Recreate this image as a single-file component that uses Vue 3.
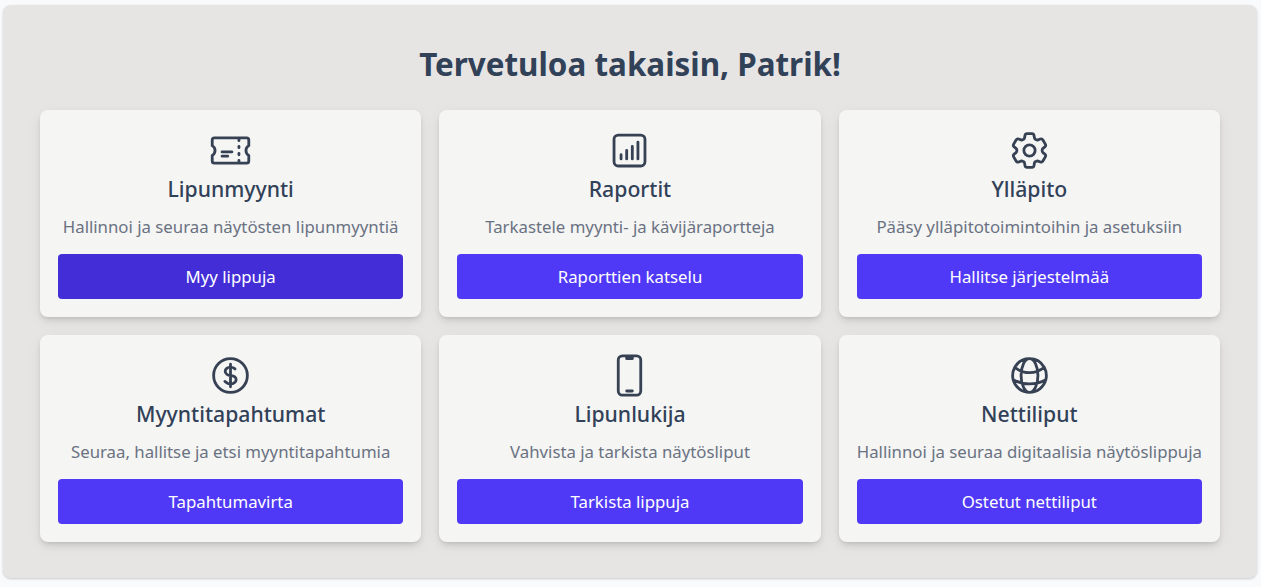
<template>
  <div class="page">
    <main class="panel">
      <h1 class="welcome">Tervetuloa takaisin, Patrik!</h1>
      <div class="grid">
        <section v-for="(card, i) in cards" :key="card.title" class="card">
          <svg class="icon" viewBox="0 0 24 24" fill="none" stroke="currentColor" stroke-width="1.5" stroke-linecap="round" stroke-linejoin="round">
            <path v-for="d in card.paths" :key="d" :d="d" />
          </svg>
          <h2 class="title">{{ card.title }}</h2>
          <p class="desc">{{ card.desc }}</p>
          <button class="action" :class="{ hovered: i === 0 }">{{ card.action }}</button>
        </section>
      </div>
    </main>
  </div>
</template>

<script setup>
const cards = [
  {
    title: 'Lipunmyynti',
    desc: 'Hallinnoi ja seuraa näytösten lipunmyyntiä',
    action: 'Myy lippuja',
    paths: ['M16.5 6v.75m0 3v.75m0 3v.75m0 3V18m-9-5.25h5.25M7.5 15h3M3.375 5.25c-.621 0-1.125.504-1.125 1.125v3.026a2.999 2.999 0 0 1 0 5.198v3.026c0 .621.504 1.125 1.125 1.125h17.25c.621 0 1.125-.504 1.125-1.125v-3.026a2.999 2.999 0 0 1 0-5.198V6.375c0-.621-.504-1.125-1.125-1.125H3.375Z'],
  },
  {
    title: 'Raportit',
    desc: 'Tarkastele myynti- ja kävijäraportteja',
    action: 'Raporttien katselu',
    paths: ['M7.5 14.25v2.25m3-4.5v4.5m3-6.75v6.75m3-9v9M6 20.25h12A2.25 2.25 0 0 0 20.25 18V6A2.25 2.25 0 0 0 18 3.75H6A2.25 2.25 0 0 0 3.75 6v12A2.25 2.25 0 0 0 6 20.25Z'],
  },
  {
    title: 'Ylläpito',
    desc: 'Pääsy ylläpitotoimintoihin ja asetuksiin',
    action: 'Hallitse järjestelmää',
    paths: [
      'M9.594 3.94c.09-.542.56-.94 1.11-.94h2.593c.55 0 1.02.398 1.11.94l.213 1.281c.063.374.313.686.645.87.074.04.147.083.22.127.325.196.72.257 1.075.124l1.217-.456a1.125 1.125 0 0 1 1.37.49l1.296 2.247a1.125 1.125 0 0 1-.26 1.431l-1.003.827c-.293.241-.438.613-.43.992a7.723 7.723 0 0 1 0 .255c-.008.378.137.75.43.991l1.004.827c.424.35.534.955.26 1.43l-1.298 2.247a1.125 1.125 0 0 1-1.369.491l-1.217-.456c-.355-.133-.75-.072-1.076.124a6.47 6.47 0 0 1-.22.128c-.331.183-.581.495-.644.869l-.213 1.281c-.09.543-.56.94-1.11.94h-2.594c-.55 0-1.019-.398-1.11-.94l-.213-1.281c-.062-.374-.312-.686-.644-.87a6.52 6.52 0 0 1-.22-.127c-.325-.196-.72-.257-1.076-.124l-1.217.456a1.125 1.125 0 0 1-1.369-.49l-1.297-2.247a1.125 1.125 0 0 1 .26-1.431l1.004-.827c.292-.24.437-.613.43-.991a6.932 6.932 0 0 1 0-.255c.007-.38-.138-.751-.43-.992l-1.004-.827a1.125 1.125 0 0 1-.26-1.43l1.297-2.247a1.125 1.125 0 0 1 1.37-.491l1.216.456c.356.133.751.072 1.076-.124.072-.044.146-.086.22-.128.332-.183.582-.495.644-.869l.214-1.28Z',
      'M15 12a3 3 0 1 1-6 0 3 3 0 0 1 6 0Z',
    ],
  },
  {
    title: 'Myyntitapahtumat',
    desc: 'Seuraa, hallitse ja etsi myyntitapahtumia',
    action: 'Tapahtumavirta',
    paths: ['M12 6v12m-3-2.818.879.659c1.171.879 3.07.879 4.242 0 1.172-.879 1.172-2.303 0-3.182C13.536 12.219 12.768 12 12 12c-.725 0-1.45-.22-2.003-.659-1.106-.879-1.106-2.303 0-3.182s2.9-.879 4.006 0l.415.33M21 12a9 9 0 1 1-18 0 9 9 0 0 1 18 0Z'],
  },
  {
    title: 'Lipunlukija',
    desc: 'Vahvista ja tarkista näytösliput',
    action: 'Tarkista lippuja',
    paths: ['M10.5 1.5H8.25A2.25 2.25 0 0 0 6 3.75v16.5a2.25 2.25 0 0 0 2.25 2.25h7.5A2.25 2.25 0 0 0 18 20.25V3.75a2.25 2.25 0 0 0-2.25-2.25H13.5m-3 0V3h3V1.5m-3 0h3m-3 18.75h3'],
  },
  {
    title: 'Nettiliput',
    desc: 'Hallinnoi ja seuraa digitaalisia näytöslippuja',
    action: 'Ostetut nettiliput',
    paths: ['M12 21a9.004 9.004 0 0 0 8.716-6.747M12 21a9.004 9.004 0 0 1-8.716-6.747M12 21c2.485 0 4.5-4.03 4.5-9S14.485 3 12 3m0 18c-2.485 0-4.5-4.03-4.5-9S9.515 3 12 3m0 0a8.997 8.997 0 0 1 7.843 4.582M12 3a8.997 8.997 0 0 0-7.843 4.582m15.686 0A11.953 11.953 0 0 1 12 10.5c-2.998 0-5.74-1.1-7.843-2.918m15.686 0A8.959 8.959 0 0 1 21 12c0 .778-.099 1.533-.284 2.253m0 0A17.919 17.919 0 0 1 12 16.5c-3.162 0-6.133-.815-8.716-2.247m0 0A9.015 9.015 0 0 1 3 12c0-1.605.42-3.113 1.157-4.418'],
  },
]
</script>

<style scoped>
.page {
  padding: 5px 4px 9px 3px;
  font-family: "Noto Sans", "Open Sans", sans-serif;
}

.panel {
  background: #e7e5e4;
  border-radius: 8px;
  padding: 36px 37px;
  box-shadow: 0 1px 3px rgba(0, 0, 0, 0.1), 0 1px 2px rgba(0, 0, 0, 0.1);
}

.welcome {
  margin: 0 0 24px;
  height: 45px;
  line-height: 45px;
  text-align: center;
  font-size: 31.4px;
  font-weight: 700;
  color: #314158;
}

.grid {
  display: grid;
  grid-template-columns: repeat(3, minmax(0, 1fr));
  gap: 18px;
}

.card {
  display: flex;
  flex-direction: column;
  align-items: center;
  height: 207px;
  box-sizing: border-box;
  padding: 18px 18px 18px;
  background: #f5f5f4;
  border-radius: 8px;
  box-shadow: 0 4px 6px -1px rgba(0, 0, 0, 0.1), 0 2px 4px -2px rgba(0, 0, 0, 0.1), 0 4px 16px rgba(0, 0, 0, 0.05);
}

.icon {
  width: 45px;
  height: 45px;
  color: #364153;
  flex: none;
}

.title {
  margin: 2px 0 0;
  font-size: 21.2px;
  line-height: 28px;
  font-weight: 500;
  color: #314158;
}

.desc {
  margin: 12px 0 0;
  font-size: 16.8px;
  line-height: 24px;
  color: #6a7282;
  white-space: nowrap;
}

.action {
  margin-top: auto;
  width: 100%;
  height: 45px;
  border: none;
  border-radius: 4px;
  background: #4f39f6;
  color: #fff;
  font: inherit;
  font-size: 16.8px;
}

.action.hovered {
  background: #432dd7;
}
</style>

<style>
body {
  background: #f8fafc;
}
</style>
